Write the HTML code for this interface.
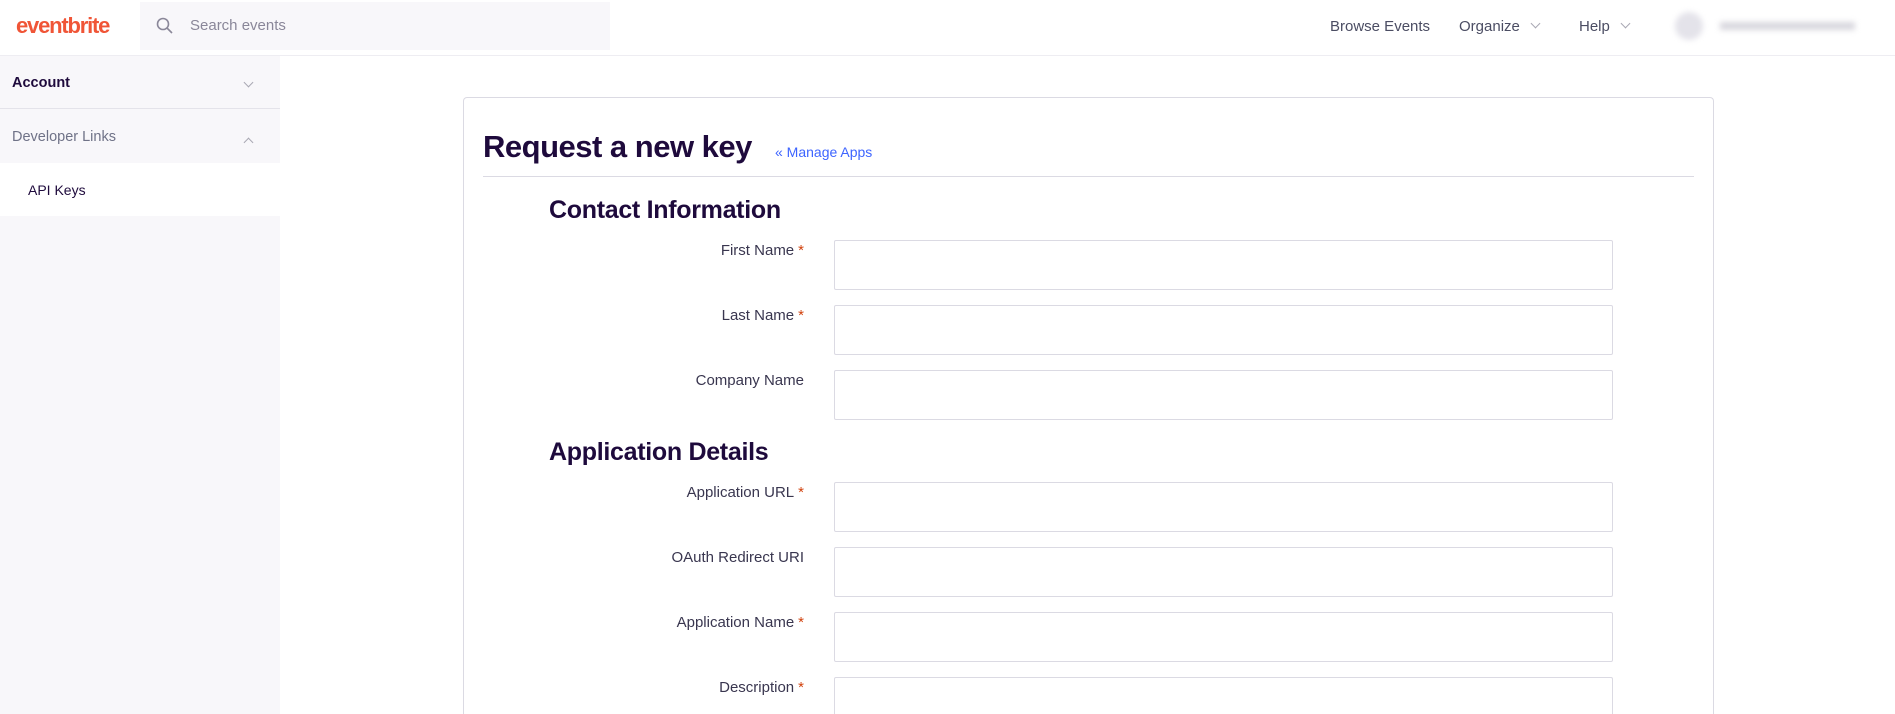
<!DOCTYPE html>
<html><head><style>
*{box-sizing:border-box;margin:0;padding:0}
html,body{width:1895px;height:714px;overflow:hidden}
body{background:#fff;font-family:"Liberation Sans",sans-serif;color:#1e0a3c}
#w{position:relative;width:1895px;height:714px;overflow:hidden}
.hdr{position:absolute;left:0;top:0;width:1895px;height:56px;border-bottom:1px solid #eeedf2;background:#fff}
.logo{position:absolute;left:16px;top:13px;font-size:22px;font-weight:bold;color:#f05537;letter-spacing:-1.2px}
.search{position:absolute;left:140px;top:2px;width:470px;height:48px;background:#f8f7fa}
.search span{position:absolute;left:50px;top:15px;font-size:15px;color:#8a8799}
.nav{position:absolute;top:18px;font-size:15px;color:#4b4d63}
.chev{display:inline-block;width:7px;height:7px;border-right:1.5px solid #a9a8b3;border-bottom:1.5px solid #a9a8b3;transform:rotate(45deg);margin-left:12px;position:relative;top:-4px}
.side{position:absolute;left:0;top:56px;width:280px;height:658px;background:#f8f7fa}
.srow{position:absolute;left:0;width:280px;font-size:14.5px}
.card{position:absolute;left:463px;top:97px;width:1251px;height:617px;border:1px solid #dbdae3;border-bottom:none;border-radius:4px 4px 0 0}
h1{position:absolute;left:483px;top:129px;font-size:31px;font-weight:bold;letter-spacing:-0.5px}
.ma{position:absolute;left:775px;top:144px;font-size:14px;color:#3d64ff}
.div{position:absolute;left:483px;top:176px;width:1211px;height:1px;background:#dbdae3}
h2{position:absolute;left:549px;font-size:25px;font-weight:bold;letter-spacing:-0.3px}
.lbl{position:absolute;right:1091px;font-size:15px;color:#39364f;text-align:right;white-space:nowrap}
.lbl b{color:#d1410c;font-weight:normal;margin-left:4px}
.inp{position:absolute;left:834px;width:779px;height:50px;border:1px solid #dbdae3;border-radius:2px}
</style></head><body><div id="w">
<div class="hdr">
<div class="logo">eventbrite</div>
<div class="search"><svg style="position:absolute;left:16px;top:15px" width="18" height="18" viewBox="0 0 18 18"><circle cx="7" cy="7" r="5.5" fill="none" stroke="#8a8799" stroke-width="1.6"/><path d="M11 11l5 5" stroke="#8a8799" stroke-width="1.6"/></svg><span>Search events</span></div>
<div class="nav" style="left:1330px">Browse Events</div>
<div class="nav" style="left:1459px">Organize<i class="chev"></i></div>
<div class="nav" style="left:1579px">Help<i class="chev"></i></div>
<div style="position:absolute;left:1675px;top:12px;width:28px;height:28px;border-radius:50%;background:#e4e3ea;filter:blur(3px)"></div>
<div style="position:absolute;left:1720px;top:22px;width:135px;height:8px;background:#d8d7de;filter:blur(3px)"></div>
</div>
<div class="side">
<div class="srow" style="top:0;height:53px;border-bottom:1px solid #e4e3ea"><span style="position:absolute;left:12px;top:19px;font-weight:bold">Account</span><i class="chev" style="position:absolute;left:245px;top:23px;margin:0"></i></div>
<div class="srow" style="top:54px;height:53px;color:#6f7287"><span style="position:absolute;left:12px;top:19px">Developer Links</span><i class="chev" style="position:absolute;left:245px;top:29px;margin:0;transform:rotate(225deg)"></i></div>
<div class="srow" style="top:107px;height:53px;background:#fff"><span style="position:absolute;left:28px;top:19px;font-size:14px">API Keys</span></div>
</div>
<div class="card"></div>
<h1>Request a new key</h1>
<div class="ma">« Manage Apps</div>
<div class="div"></div>
<h2 style="top:196px">Contact Information</h2>
<div class="lbl" style="top:242px">First Name<b>*</b></div><div class="inp" style="top:240px"></div>
<div class="lbl" style="top:307px">Last Name<b>*</b></div><div class="inp" style="top:305px"></div>
<div class="lbl" style="top:372px">Company Name</div><div class="inp" style="top:370px"></div>
<h2 style="top:438px">Application Details</h2>
<div class="lbl" style="top:484px">Application URL<b>*</b></div><div class="inp" style="top:482px"></div>
<div class="lbl" style="top:549px">OAuth Redirect URI</div><div class="inp" style="top:547px"></div>
<div class="lbl" style="top:614px">Application Name<b>*</b></div><div class="inp" style="top:612px"></div>
<div class="lbl" style="top:679px">Description<b>*</b></div><div class="inp" style="top:677px;height:37px;border-bottom:none;border-radius:2px 2px 0 0"></div>
</div></body></html>
